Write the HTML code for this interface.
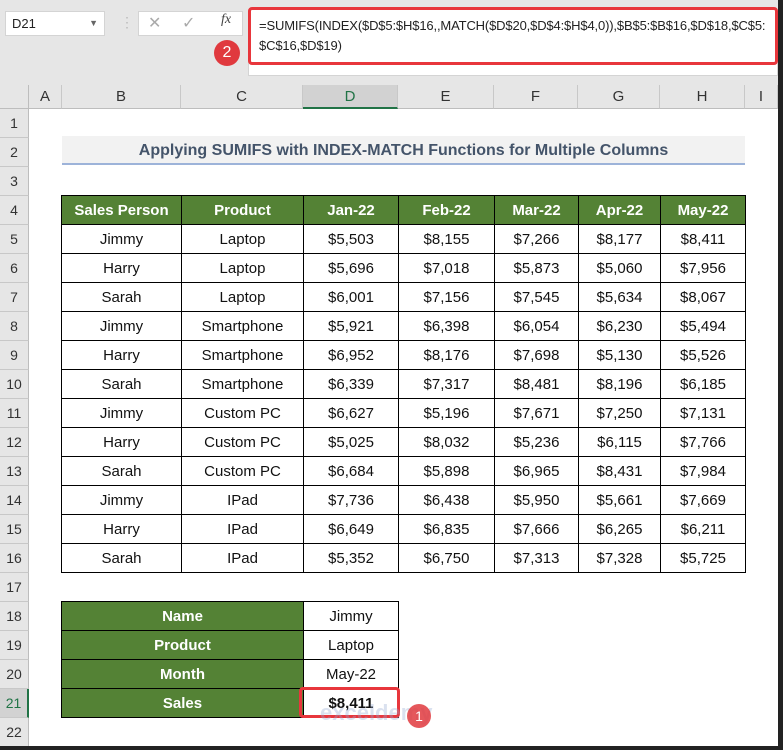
<!DOCTYPE html>
<html><head><style>
*{margin:0;padding:0;box-sizing:border-box}
body{width:783px;height:750px;overflow:hidden;background:#fff;font-family:"Liberation Sans",Arial,sans-serif;position:relative}
.abs{position:absolute}
#top{left:0;top:0;width:783px;height:85px;background:#e6e6e6}
.nb{left:5px;top:11px;width:100px;height:25px;background:#fff;border:1px solid #d4d4d4;font-size:13px;line-height:23px;padding-left:6px;color:#222}
.fb{left:248px;top:7px;width:530px;height:58px;background:#fff;border:3px solid #e8363c;border-radius:4px;font-size:13px;letter-spacing:-0.15px;white-space:nowrap;line-height:20px;padding:6px 8px;color:#222}
.colh{top:85px;height:24px;background:#e6e6e6;border-right:1px solid #c8c8c8;border-bottom:1px solid #bdbdbd;font-size:15px;text-align:center;line-height:24px;color:#333}
.rowh{left:0;width:29px;height:29px;background:#e6e6e6;border-bottom:1px solid #c8c8c8;border-right:1px solid #bdbdbd;font-size:14px;text-align:center;line-height:29px;color:#333}
table{border-collapse:collapse;position:absolute}
td{border:1px solid #000;height:29px;text-align:center;font-size:15px;color:#111;padding:0}
th{border:1px solid #000;height:29px;text-align:center;font-size:15px;color:#fff;background:#548235;font-weight:bold;padding:0}
</style></head><body>
<div id="top" class="abs"></div>
<div class="abs" style="left:248px;top:60px;width:530px;height:16px;background:#fff;border:1px solid #d4d4d4"></div>
<div class="abs nb">D21<span style="position:absolute;right:6px;top:0;font-size:9px;color:#666">▼</span></div>
<div class="abs" style="left:120px;top:14px;color:#bbb;font-size:14px">⋮</div>
<div class="abs" style="left:138px;top:11px;width:105px;height:25px;background:#fff;border:1px solid #d4d4d4"></div>
<div class="abs" style="left:148px;top:13px;color:#aaa;font-size:16px">✕</div>
<div class="abs" style="left:182px;top:13px;color:#aaa;font-size:16px">✓</div>
<div class="abs" style="left:221px;top:12px;color:#444;font-size:14px;font-style:italic;font-family:'Liberation Serif',serif">fx</div>
<div class="abs fb">=SUMIFS(INDEX($D$5:$H$16,,MATCH($D$20,$D$4:$H$4,0)),$B$5:$B$16,$D$18,$C$5:<br>$C$16,$D$19)</div>
<div class="abs" style="left:214px;top:40px;width:26px;height:26px;border-radius:50%;background:#e0393e;color:#fff;font-size:16px;text-align:center;line-height:26px">2</div>
<div class="abs" style="left:0;top:85px;width:29px;height:24px;background:#e6e6e6;border-right:1px solid #bdbdbd;border-bottom:1px solid #bdbdbd"></div>
<div class="abs colh" style="left:29px;width:33px">A</div>
<div class="abs colh" style="left:62px;width:119px">B</div>
<div class="abs colh" style="left:181px;width:122px">C</div>
<div class="abs colh" style="left:303px;width:95px;background:#d2d2d2;border-bottom:2px solid #217346;color:#217346">D</div>
<div class="abs colh" style="left:398px;width:96px">E</div>
<div class="abs colh" style="left:494px;width:84px">F</div>
<div class="abs colh" style="left:578px;width:82px">G</div>
<div class="abs colh" style="left:660px;width:85px">H</div>
<div class="abs colh" style="left:745px;width:33px">I</div>
<div class="abs rowh" style="top:109px">1</div><div class="abs rowh" style="top:138px">2</div><div class="abs rowh" style="top:167px">3</div><div class="abs rowh" style="top:196px">4</div><div class="abs rowh" style="top:225px">5</div><div class="abs rowh" style="top:254px">6</div><div class="abs rowh" style="top:283px">7</div><div class="abs rowh" style="top:312px">8</div><div class="abs rowh" style="top:341px">9</div><div class="abs rowh" style="top:370px">10</div><div class="abs rowh" style="top:399px">11</div><div class="abs rowh" style="top:428px">12</div><div class="abs rowh" style="top:457px">13</div><div class="abs rowh" style="top:486px">14</div><div class="abs rowh" style="top:515px">15</div><div class="abs rowh" style="top:544px">16</div><div class="abs rowh" style="top:573px">17</div><div class="abs rowh" style="top:602px">18</div><div class="abs rowh" style="top:631px">19</div><div class="abs rowh" style="top:660px">20</div><div class="abs rowh" style="top:689px;background:#d2d2d2;border-right:2px solid #217346;color:#217346">21</div><div class="abs rowh" style="top:718px">22</div>
<div class="abs" style="left:778px;top:0;width:5px;height:750px;background:#222"></div>
<div class="abs" style="left:0;top:746px;width:783px;height:4px;background:#222"></div>
<div class="abs" style="left:62px;top:136px;width:683px;height:29px;background:#f2f2f2;border-bottom:2px solid #9db3d9;text-align:center;font-weight:bold;font-size:16px;line-height:29px;color:#44546a">Applying SUMIFS with INDEX-MATCH Functions for Multiple Columns</div>
<table style="left:61px;top:195px">
<tr><th style="width:120px">Sales Person</th><th style="width:122px">Product</th><th style="width:95px">Jan-22</th><th style="width:96px">Feb-22</th><th style="width:84px">Mar-22</th><th style="width:82px">Apr-22</th><th style="width:85px">May-22</th></tr>
<tr><td>Jimmy</td><td>Laptop</td><td>$5,503</td><td>$8,155</td><td>$7,266</td><td>$8,177</td><td>$8,411</td></tr>
<tr><td>Harry</td><td>Laptop</td><td>$5,696</td><td>$7,018</td><td>$5,873</td><td>$5,060</td><td>$7,956</td></tr>
<tr><td>Sarah</td><td>Laptop</td><td>$6,001</td><td>$7,156</td><td>$7,545</td><td>$5,634</td><td>$8,067</td></tr>
<tr><td>Jimmy</td><td>Smartphone</td><td>$5,921</td><td>$6,398</td><td>$6,054</td><td>$6,230</td><td>$5,494</td></tr>
<tr><td>Harry</td><td>Smartphone</td><td>$6,952</td><td>$8,176</td><td>$7,698</td><td>$5,130</td><td>$5,526</td></tr>
<tr><td>Sarah</td><td>Smartphone</td><td>$6,339</td><td>$7,317</td><td>$8,481</td><td>$8,196</td><td>$6,185</td></tr>
<tr><td>Jimmy</td><td>Custom PC</td><td>$6,627</td><td>$5,196</td><td>$7,671</td><td>$7,250</td><td>$7,131</td></tr>
<tr><td>Harry</td><td>Custom PC</td><td>$5,025</td><td>$8,032</td><td>$5,236</td><td>$6,115</td><td>$7,766</td></tr>
<tr><td>Sarah</td><td>Custom PC</td><td>$6,684</td><td>$5,898</td><td>$6,965</td><td>$8,431</td><td>$7,984</td></tr>
<tr><td>Jimmy</td><td>IPad</td><td>$7,736</td><td>$6,438</td><td>$5,950</td><td>$5,661</td><td>$7,669</td></tr>
<tr><td>Harry</td><td>IPad</td><td>$6,649</td><td>$6,835</td><td>$7,666</td><td>$6,265</td><td>$6,211</td></tr>
<tr><td>Sarah</td><td>IPad</td><td>$5,352</td><td>$6,750</td><td>$7,313</td><td>$7,328</td><td>$5,725</td></tr>
</table>
<table style="left:61px;top:601px">
<tr><th style="width:242px">Name</th><td style="width:95px">Jimmy</td></tr>
<tr><th>Product</th><td>Laptop</td></tr>
<tr><th>Month</th><td>May-22</td></tr>
<tr><th>Sales</th><td style="font-weight:bold">$8,411</td></tr>
</table>
<div class="abs" style="left:299px;top:687px;width:101px;height:31px;border:3px solid #e8363c;border-radius:4px"></div>
<div class="abs" style="left:320px;top:700px;font-size:22px;font-weight:bold;color:rgba(150,170,210,0.35)">exceldemy</div>
<div class="abs" style="left:407px;top:704px;width:24px;height:24px;border-radius:50%;background:rgba(224,57,62,0.85);color:#fff;font-size:14px;text-align:center;line-height:24px">1</div>
</body></html>
